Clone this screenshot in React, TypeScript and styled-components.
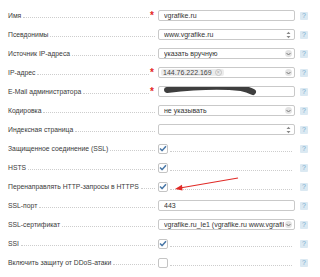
import { createGlobalStyle, styled } from 'styled-components';

const GlobalStyle = createGlobalStyle`
  body {
    margin: 0;
    background: #fff;
    font-family: 'Liberation Sans', Arial, sans-serif;
    color: #333;
  }
`;

type Field =
  | { kind: 'input'; value?: string; scribble?: boolean }
  | { kind: 'spinner'; value?: string }
  | { kind: 'select'; value?: string; tag?: string }
  | { kind: 'check'; checked: boolean; arrow?: boolean };

type RowData = { label: string; required?: boolean; field: Field };

const rows: RowData[] = [
  { label: 'Имя', required: true, field: { kind: 'input', value: 'vgrafike.ru' } },
  { label: 'Псевдонимы', field: { kind: 'spinner', value: 'www.vgrafike.ru' } },
  { label: 'Источник IP-адреса', field: { kind: 'select', value: 'указать вручную' } },
  { label: 'IP-адрес', required: true, field: { kind: 'select', tag: '144.76.222.169' } },
  { label: 'E-Mail администратора', required: true, field: { kind: 'input', scribble: true } },
  { label: 'Кодировка', field: { kind: 'select', value: 'не указывать' } },
  { label: 'Индексная страница', field: { kind: 'spinner' } },
  { label: 'Защищенное соединение (SSL)', field: { kind: 'check', checked: true } },
  { label: 'HSTS', field: { kind: 'check', checked: true } },
  {
    label: 'Перенаправлять HTTP-запросы в HTTPS',
    field: { kind: 'check', checked: true, arrow: true },
  },
  { label: 'SSL-порт', field: { kind: 'input', value: '443' } },
  {
    label: 'SSL-сертификат',
    field: { kind: 'select', value: 'vgrafike.ru_le1 (vgrafike.ru www.vgrafik' },
  },
  { label: 'SSI', field: { kind: 'check', checked: true } },
  { label: 'Включить защиту от DDoS-атаки', field: { kind: 'check', checked: false } },
];

const renderField = (field: Field) => {
  switch (field.kind) {
    case 'input':
      return (
        <Box>
          <Value>{field.value}</Value>
          {field.scribble && (
            <Scribble width='100' height='12' viewBox='0 0 100 12'>
              <path
                d='M4 6 C 30 3, 60 2, 78 4 C 84 5, 88 7, 90 8'
                stroke='#3e3e3e'
                strokeWidth='6'
                strokeLinecap='round'
                fill='none'
              />
            </Scribble>
          )}
        </Box>
      );
    case 'spinner':
      return (
        <Box>
          <Value>{field.value}</Value>
          <Spin>
            <svg width='5' height='8' viewBox='0 0 5 8'>
              <path d='M0.5 3 L2.5 0.8 L4.5 3 Z M0.5 5 L2.5 7.2 L4.5 5 Z' fill='#888' />
            </svg>
          </Spin>
        </Box>
      );
    case 'select':
      return (
        <Box>
          {field.tag ? (
            <Tag>
              {field.tag}
              <TagClose>×</TagClose>
            </Tag>
          ) : (
            <Value>{field.value}</Value>
          )}
          <DropBtn>
            <svg width='5' height='4' viewBox='0 0 5 4'>
              <path d='M0.5 1 L2.5 3 L4.5 1' stroke='#777' strokeWidth='1' fill='none' />
            </svg>
          </DropBtn>
        </Box>
      );
    case 'check':
      return (
        <CheckLine>
          <CheckBox>
            {field.checked && (
              <svg width='8' height='7' viewBox='0 0 8 7'>
                <path
                  d='M1 3.5 L3.2 5.6 L7 1.2'
                  stroke='#4a78a8'
                  strokeWidth='1.5'
                  fill='none'
                  strokeLinejoin='round'
                />
              </svg>
            )}
          </CheckBox>
          <Leader />
          {field.arrow && (
            <Arrow width='70' height='16' viewBox='0 0 70 16'>
              <path d='M65 2 L4 12.5' stroke='#e02a26' strokeWidth='1.2' fill='none' />
              <path d='M2 13 L9 8.8 L9.5 14.4 Z' fill='#e02a26' />
            </Arrow>
          )}
        </CheckLine>
      );
  }
};

const App = () => (
  <Page>
    <GlobalStyle />
    {rows.map((row) => (
      <Row key={row.label}>
        <LabelCell>
          <LabelText>{row.label}</LabelText>
          <Leader />
          {row.required ? <Star>*</Star> : <StarGap />}
        </LabelCell>
        <Control>{renderField(row.field)}</Control>
        <Help>?</Help>
      </Row>
    ))}
  </Page>
);

export default App;

const Page = styled.div`
  display: flex;
  flex-direction: column;
  padding: 6px 0 0 8px;
  width: 320px;
  box-sizing: border-box;
`;

const Row = styled.div`
  display: flex;
  align-items: center;
  height: 19px;
`;

const LabelCell = styled.div`
  display: flex;
  align-items: flex-end;
  width: 150px;
  height: 9px;
`;

const LabelText = styled.span`
  font-size: 6.8px;
  line-height: 9px;
  color: #3a3a3a;
  white-space: nowrap;
`;

const Leader = styled.div`
  flex: 1;
  margin: 0 3px 2px 2px;
  border-bottom: 1px dotted #cdcdcd;
  align-self: flex-end;
`;

const Star = styled.span`
  width: 8px;
  font-size: 10px;
  line-height: 9px;
  height: 9px;
  color: #e3261f;
  font-weight: bold;
  margin-left: -2px;
`;

const StarGap = styled.span`
  width: 0;
`;

const Control = styled.div`
  width: 137px;
  height: 11px;
  display: flex;
  align-items: center;
`;

const Box = styled.div`
  position: relative;
  display: flex;
  align-items: center;
  width: 100%;
  height: 11px;
  border: 1px solid #c9c9c9;
  border-radius: 2px;
  padding: 0 4px 0 5px;
  box-sizing: border-box;
  background: #fff;
  overflow: hidden;
`;

const Value = styled.span`
  flex: 1;
  font-size: 7px;
  line-height: 9px;
  color: #333;
  white-space: nowrap;
  overflow: hidden;
`;

const Spin = styled.span`
  display: flex;
  margin-right: -1px;
`;

const DropBtn = styled.span`
  display: flex;
  align-items: center;
  justify-content: center;
  flex-shrink: 0;
  width: 7px;
  height: 7px;
  border-radius: 50%;
  background: #e3e3e3;
  margin-right: -2px;
  margin-left: 1px;
`;

const Tag = styled.span`
  display: flex;
  align-items: center;
  gap: 3px;
  height: 7px;
  margin-left: -3px;
  padding: 0 2px;
  border-radius: 2px;
  background: #ececec;
  font-size: 7px;
  line-height: 7px;
  color: #444;
  margin-right: auto;
`;

const TagClose = styled.span`
  display: inline-flex;
  align-items: center;
  justify-content: center;
  width: 5px;
  height: 5px;
  border-radius: 50%;
  border: 1px solid #c4c4c4;
  font-size: 5px;
  line-height: 5px;
  color: #aaa;
`;

const Scribble = styled.svg`
  position: absolute;
  left: 4px;
  top: -3px;
`;

const CheckLine = styled.div`
  position: relative;
  display: flex;
  align-items: center;
  width: 100%;
  height: 11px;
`;

const CheckBox = styled.span`
  display: flex;
  align-items: center;
  justify-content: center;
  width: 10px;
  height: 10px;
  border: 1px solid #c4c4c4;
  border-radius: 2px;
  box-sizing: border-box;
  background: #fff;
  flex-shrink: 0;
`;

const Arrow = styled.svg`
  position: absolute;
  left: 15px;
  top: -5px;
`;

const Help = styled.span`
  width: 8px;
  height: 8px;
  margin-left: 5px;
  background: #dbe9f2;
  border-radius: 1px;
  color: #7aaed0;
  font-size: 7px;
  line-height: 8px;
  text-align: center;
`;
